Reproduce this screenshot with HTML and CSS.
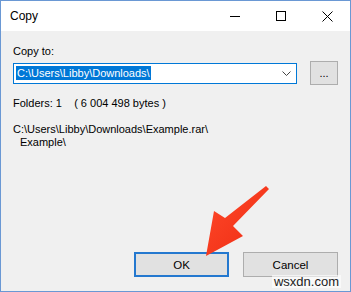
FILE: index.html
```html
<!DOCTYPE html>
<html lang="en">
<head>
    <meta charset="UTF-8">
    <title>Copy</title>
    <link rel="stylesheet" href="styles.css">
</head>
<body>
    <div class="window">
        <div class="titlebar">
            <span class="title">Copy</span>
            <div class="caption-buttons">
                <span class="caption-btn">
                    <svg width="10" height="10" viewBox="0 0 10 10"><line x1="0" y1="5.5" x2="10" y2="5.5" stroke="#000" stroke-width="1"/></svg>
                </span>
                <span class="caption-btn">
                    <svg width="10" height="10" viewBox="0 0 10 10"><rect x="0.5" y="0.5" width="9" height="9" fill="none" stroke="#000" stroke-width="1"/></svg>
                </span>
                <span class="caption-btn">
                    <svg width="11" height="11" viewBox="0 0 11 11"><path d="M0.5 0.5 L10.5 10.5 M10.5 0.5 L0.5 10.5" stroke="#000" stroke-width="1"/></svg>
                </span>
            </div>
        </div>

        <div class="content">
            <div class="label">Copy to:</div>
            <div class="combo-row">
                <div class="combo">
                    <span class="selected">C:\Users\Libby\Downloads\</span>
                    <svg class="chevron" width="9" height="5" viewBox="0 0 9 5"><polyline points="0.5,0.5 4.5,4.5 8.5,0.5" fill="none" stroke="#444" stroke-width="1"/></svg>
                </div>
                <button class="browse">...</button>
            </div>

            <div class="folders">Folders: 1    ( 6 004 498 bytes )</div>

            <div class="paths">
                <div>C:\Users\Libby\Downloads\Example.rar\</div>
                <div class="indent">Example\</div>
            </div>

            <div class="buttons">
                <button class="btn default">OK</button>
                <button class="btn">Cancel</button>
            </div>
        </div>

        <!-- arrow pointing at the OK button -->
        <svg class="arrow" width="351" height="292" viewBox="0 0 351 292">
            <defs>
                <linearGradient id="red" x1="0" y1="0" x2="1" y2="1">
                    <stop offset="0" stop-color="#ff4a2a"/>
                    <stop offset="1" stop-color="#ee2a12"/>
                </linearGradient>
            </defs>
            <polygon points="206,256 214,211 225,218 266,186 269,189 233,226 243,236" fill="url(#red)"/>
        </svg>

        <span class="watermark">wsxdn.com</span>
    </div>
</body>
</html>
```

FILE: styles.css
```css
body {
    margin: 0;
    font-family: "Liberation Sans", Arial, sans-serif;
    font-size: 11px;
    color: #000;
}

.window {
    position: relative;
    width: 351px;
    height: 292px;
    box-sizing: border-box;
    border: 1px solid #6a98d4;
    background-color: #f0f0f0;
    display: flex;
    flex-direction: column;
}

/* Title bar */
.titlebar {
    height: 30px;
    background-color: #fff;
    display: flex;
    align-items: center;
    justify-content: space-between;
}

.title {
    padding-left: 9px;
    font-size: 12px;
}

.caption-buttons {
    display: flex;
    height: 100%;
}

.caption-btn {
    width: 46px;
    height: 100%;
    display: flex;
    align-items: center;
    justify-content: center;
}

/* Content */
.content {
    flex: 1;
    padding: 13px 12px 0 12px;
    display: flex;
    flex-direction: column;
}

.label {
    line-height: 15px;
}

.combo-row {
    display: flex;
    align-items: center;
    gap: 13px;
    margin-top: 2px;
}

.combo {
    flex: 1;
    height: 21px;
    box-sizing: border-box;
    border: 1px solid #0078d7;
    background-color: #fff;
    display: flex;
    align-items: center;
    justify-content: space-between;
    padding: 0 5px 0 2px;
}

.selected {
    background-color: #0078d7;
    color: #fff;
    line-height: 14px;
    padding: 0 1px;
}

.browse {
    width: 28px;
    height: 24px;
    border: 1px solid #adadad;
    background-color: #e1e1e1;
    font-family: inherit;
    font-size: 11px;
    padding: 0;
}

.folders {
    white-space: pre;
    line-height: 15px;
    margin-top: 11px;
}

.paths {
    line-height: 13px;
    margin-top: 12px;
}

.indent {
    padding-left: 7px;
}

.buttons {
    display: flex;
    justify-content: flex-end;
    gap: 14px;
    margin-top: auto;
    margin-bottom: 14px;
}

.btn {
    width: 95px;
    height: 25px;
    box-sizing: border-box;
    border: 1px solid #adadad;
    background-color: #e1e1e1;
    font-family: inherit;
    font-size: 11.5px;
    padding: 0;
}

.btn.default {
    border: 2px solid #2478cf;
}

.arrow {
    position: absolute;
    left: -1px;
    top: -1px;
    pointer-events: none;
}

.watermark {
    position: absolute;
    right: 9px;
    bottom: 3px;
    font-size: 13px;
    line-height: 13px;
    color: #222;
    background-color: rgba(255, 255, 255, 0.6);
    padding: 0 2px;
}
```
